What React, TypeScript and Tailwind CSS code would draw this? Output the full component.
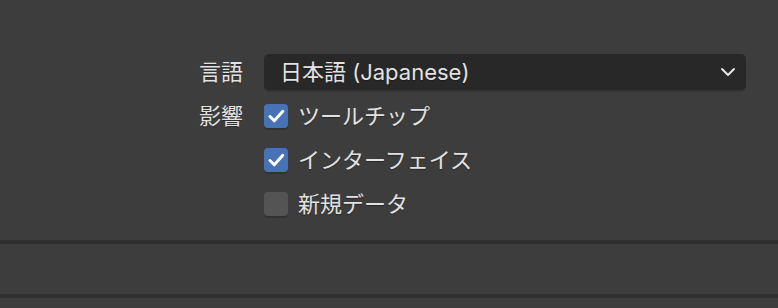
import React from "react";

const font = { fontFamily: 'Inter, "Noto Sans CJK JP", sans-serif' };

function Check({ on }: { on: boolean }) {
  return (
    <div
      className={
        "w-[24px] h-[24px] rounded-[4px] shadow-[0_2px_0_rgba(0,0,0,0.18)] " +
        (on ? "bg-[#4772b3]" : "bg-[#545454]")
      }
    >
      {on && (
        <svg width="24" height="24" viewBox="0 0 24 24">
          <path d="M6 12.5 L10.3 16.8 L18.8 7.3" fill="none" stroke="#ffffff" strokeWidth="3" strokeLinecap="round" strokeLinejoin="round" />
        </svg>
      )}
    </div>
  );
}

export default function App() {
  const rows = [
    { label: "影響", text: "ツールチップ", on: true },
    { label: "", text: "インターフェイス", on: true },
    { label: "", text: "新規データ", on: false },
  ];
  return (
    <div className="w-[778px] h-[308px] bg-[#3d3d3d] overflow-hidden flex flex-col text-[#e2e2e2] text-[22px] [text-shadow:0_1px_1px_rgba(0,0,0,0.35)]" style={font}>
      <div className="pt-[50px] h-[240px] flex flex-col">
        <div className="h-[44px] flex items-center">
          <div className="w-[243px] text-right">言語</div>
          <div className="ml-[21px] w-[482px] h-[36px] rounded-[5px] bg-[#282828] shadow-[0_2px_0_rgba(0,0,0,0.15)] flex items-center pl-[16px] pr-[10px]">
            <span className="flex-1">日本語 (Japanese)</span>
            <svg width="16" height="10" viewBox="0 0 16 10">
              <path d="M2 2 L8 8 L14 2" fill="none" stroke="#e6e6e6" strokeWidth="2" strokeLinecap="round" strokeLinejoin="round" />
            </svg>
          </div>
        </div>
        {rows.map((r, i) => (
          <div key={i} className="h-[44px] flex items-center">
            <div className="w-[243px] text-right">{r.label}</div>
            <div className="ml-[21px] flex items-center gap-[10px]">
              <Check on={r.on} />
              <span>{r.text}</span>
            </div>
          </div>
        ))}
      </div>
      <div className="h-[4px] bg-[#303030]" />
      <div className="h-[50px]" />
      <div className="h-[4px] bg-[#303030]" />
    </div>
  );
}
